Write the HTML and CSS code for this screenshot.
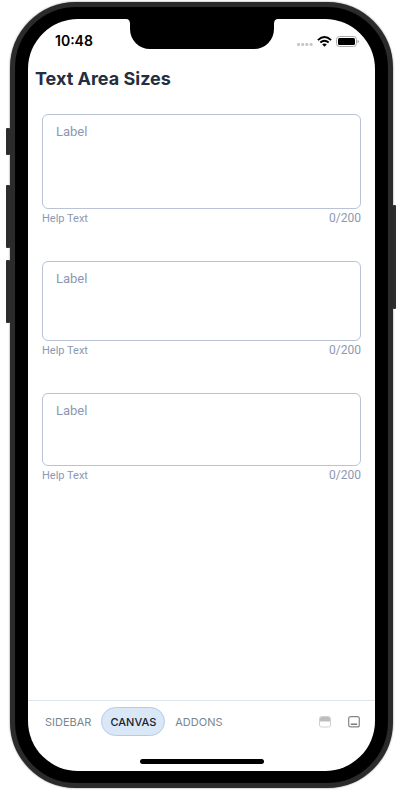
FILE: index.html
```html
<!DOCTYPE html>
<html lang="en">
<head>
  <meta charset="utf-8">
  <meta name="viewport" content="width=device-width, initial-scale=1">
  <title>Text Area Sizes</title>
  <link rel="stylesheet" href="styles.css">
</head>
<body>
  <div class="device">
    <span class="side-key side-key-mute"></span>
    <span class="side-key side-key-up"></span>
    <span class="side-key side-key-down"></span>
    <span class="side-key side-key-power"></span>
    <div class="screen">
      <svg class="notch" viewBox="0 0 152 30" aria-hidden="true">
        <path d="M0 0H152Q148 0 148 5V10A20 20 0 0 1 128 30H24A20 20 0 0 1 4 10V5Q4 0 0 0Z"/>
      </svg>
      <header class="status">
        <time class="clock">10:48</time>
        <div class="indicators">
          <svg width="16" height="4" viewBox="0 0 16 4" fill="#c8c8c8" aria-hidden="true">
            <rect x="0" y="0" width="3" height="3" rx="1"/><rect x="4.2" y="0" width="3" height="3" rx="1"/><rect x="8.4" y="0" width="3" height="3" rx="1"/><rect x="12.6" y="0" width="3" height="3" rx="1"/>
          </svg>
          <svg class="wifi" width="15" height="11" viewBox="0 0 15 11" fill="none" stroke="#000" stroke-width="1.9" aria-hidden="true">
            <path d="M0.9 4.1Q7.5 -1.9 14.1 4.1"/><path d="M3.3 6.5Q7.5 2.8 11.7 6.5"/><path d="M7.5 10.8L5.2 8.4Q7.5 6.7 9.8 8.4Z" fill="#000" stroke="none"/>
          </svg>
          <svg width="23" height="11" viewBox="0 0 23 11" aria-hidden="true">
            <rect x="0.5" y="0.5" width="20" height="10" rx="3" fill="#fff" stroke="#aaa"/>
            <rect x="2" y="2" width="17" height="7" rx="1.5"/>
            <path d="M21.5 3.8Q23 4.3 23 5.5T21.5 7.2Z" fill="#aaa"/>
          </svg>
        </div>
      </header>
      <main class="canvas">
        <h1 class="title">Text Area Sizes</h1>
        <form class="fields">
          <div class="field">
            <label class="label" for="large">Label</label>
            <textarea class="area area-large" id="large" maxlength="200"></textarea>
            <div class="hint"><span>Help Text</span><span class="count">0/200</span></div>
          </div>
          <div class="field">
            <label class="label" for="medium">Label</label>
            <textarea class="area area-medium" id="medium" maxlength="200"></textarea>
            <div class="hint"><span>Help Text</span><span class="count">0/200</span></div>
          </div>
          <div class="field">
            <label class="label" for="small">Label</label>
            <textarea class="area area-small" id="small" maxlength="200"></textarea>
            <div class="hint"><span>Help Text</span><span class="count">0/200</span></div>
          </div>
        </form>
      </main>
      <nav class="tabs">
        <button class="tab" type="button">SIDEBAR</button>
        <button class="tab tab-active" type="button">CANVAS</button>
        <button class="tab" type="button">ADDONS</button>
        <div class="tools">
          <button class="tool" type="button" aria-label="Toggle split view">
            <svg width="12" height="12" viewBox="0 0 12 12" aria-hidden="true">
              <rect x="0.5" y="0.5" width="11" height="10.5" rx="2" fill="#fff" stroke="#d0d0d0"/>
              <path d="M1 5.5V2.5Q1 1 2.5 1H9.5Q11 1 11 2.5V5.5Z" fill="#bdbdbd"/>
            </svg>
          </button>
          <button class="tool" type="button" aria-label="Toggle toolbar">
            <svg width="12" height="12" viewBox="0 0 12 12" aria-hidden="true">
              <rect x="0.7" y="0.7" width="10.6" height="10.2" rx="2" fill="#fff" stroke="#858585" stroke-width="1.2"/>
              <path d="M2.8 8.2H9.2" stroke="#707070" stroke-width="1.4"/>
            </svg>
          </button>
        </div>
      </nav>
      <div class="home-bar"></div>
    </div>
  </div>
</body>
</html>
```
FILE: styles.css
```css
* {
  box-sizing: border-box;
}

body {
  display: flex;
  min-height: 100vh;
  margin: 0;
  padding: 2px 8px 3px 10px;
  background: #fff;
  font-family: Roboto, "Liberation Sans", sans-serif;
}

.device {
  position: relative;
  display: flex;
  flex: 1;
  padding: 12px 13px;
  border: 5px solid #2b2b2b;
  border-radius: 66px;
  background: #000;
  box-shadow: inset 0 0 1px 0 #171717, 0 0 2px #777;
}

.side-key {
  position: absolute;
  left: -9px;
  width: 4px;
  border-radius: 1px;
  background: #2d2d2d;
}

.side-key-mute {
  top: 121px;
  height: 27px;
}

.side-key-up {
  top: 178px;
  height: 63px;
}

.side-key-down {
  top: 253px;
  height: 63px;
}

.side-key-power {
  top: 198px;
  right: -8px;
  left: auto;
  width: 3px;
  height: 104px;
}

.screen {
  position: relative;
  display: flex;
  flex: 1;
  flex-direction: column;
  min-width: 0;
  border-radius: 50px;
  background: #fff;
}

.notch {
  position: absolute;
  top: 0;
  left: 50%;
  width: 152px;
  height: 30px;
  transform: translateX(-50%);
}

.status {
  display: flex;
  align-items: center;
  justify-content: space-between;
  height: 44px;
  padding: 0 16px 0 27px;
}

.clock {
  font: 600 14px/20px Inter, sans-serif;
}

.indicators {
  display: flex;
  align-items: flex-end;
  gap: 4px;
}

.canvas {
  flex: 1;
  padding: 4px 7px;
}

.title {
  margin: 0;
  color: #252e40;
  font: 700 18px/24px Inter, sans-serif;
}

.fields {
  display: grid;
  gap: 36px;
  padding: 23px 7px 0;
}

.field {
  position: relative;
}

.label {
  position: absolute;
  top: 10px;
  left: 14px;
  color: #8c98b3;
  font-size: 13px;
  line-height: 16px;
}

.area {
  display: block;
  width: 100%;
  padding: 28px 14px 8px;
  border: 1px solid #b9c2d6;
  border-radius: 6px;
  background: #fff;
  color: #252e40;
  font: 13px/16px Roboto, sans-serif;
  resize: none;
}

.area-large {
  height: 95px;
}

.area-medium {
  height: 80px;
}

.area-small {
  height: 73px;
}

.hint {
  display: flex;
  justify-content: space-between;
  padding-top: 3px;
  color: #8c98b3;
  font-size: 11px;
  line-height: 13px;
}

.count {
  font-size: 12px;
}

.tabs {
  display: flex;
  align-items: center;
  gap: 1px;
  height: 42px;
  padding: 0 15px 0 8px;
  border-top: 1px solid #dce5e8;
}

.tab {
  height: 29px;
  padding: 0 8px;
  border: 1px solid transparent;
  border-radius: 15px;
  background: none;
  color: #79878d;
  font: 11px/16px Inter, sans-serif;
}

.tab-active {
  border-color: #b5cce9;
  background: #d9e7f7;
  color: #17232c;
  font-weight: 500;
}

.tools {
  display: flex;
  gap: 17px;
  margin-left: auto;
}

.tool {
  display: flex;
  padding: 0;
  border: 0;
  background: none;
}

.home-bar {
  align-self: center;
  width: 124px;
  height: 5px;
  margin: 17px 0 7px;
  border-radius: 3px;
  background: #000;
}
```
